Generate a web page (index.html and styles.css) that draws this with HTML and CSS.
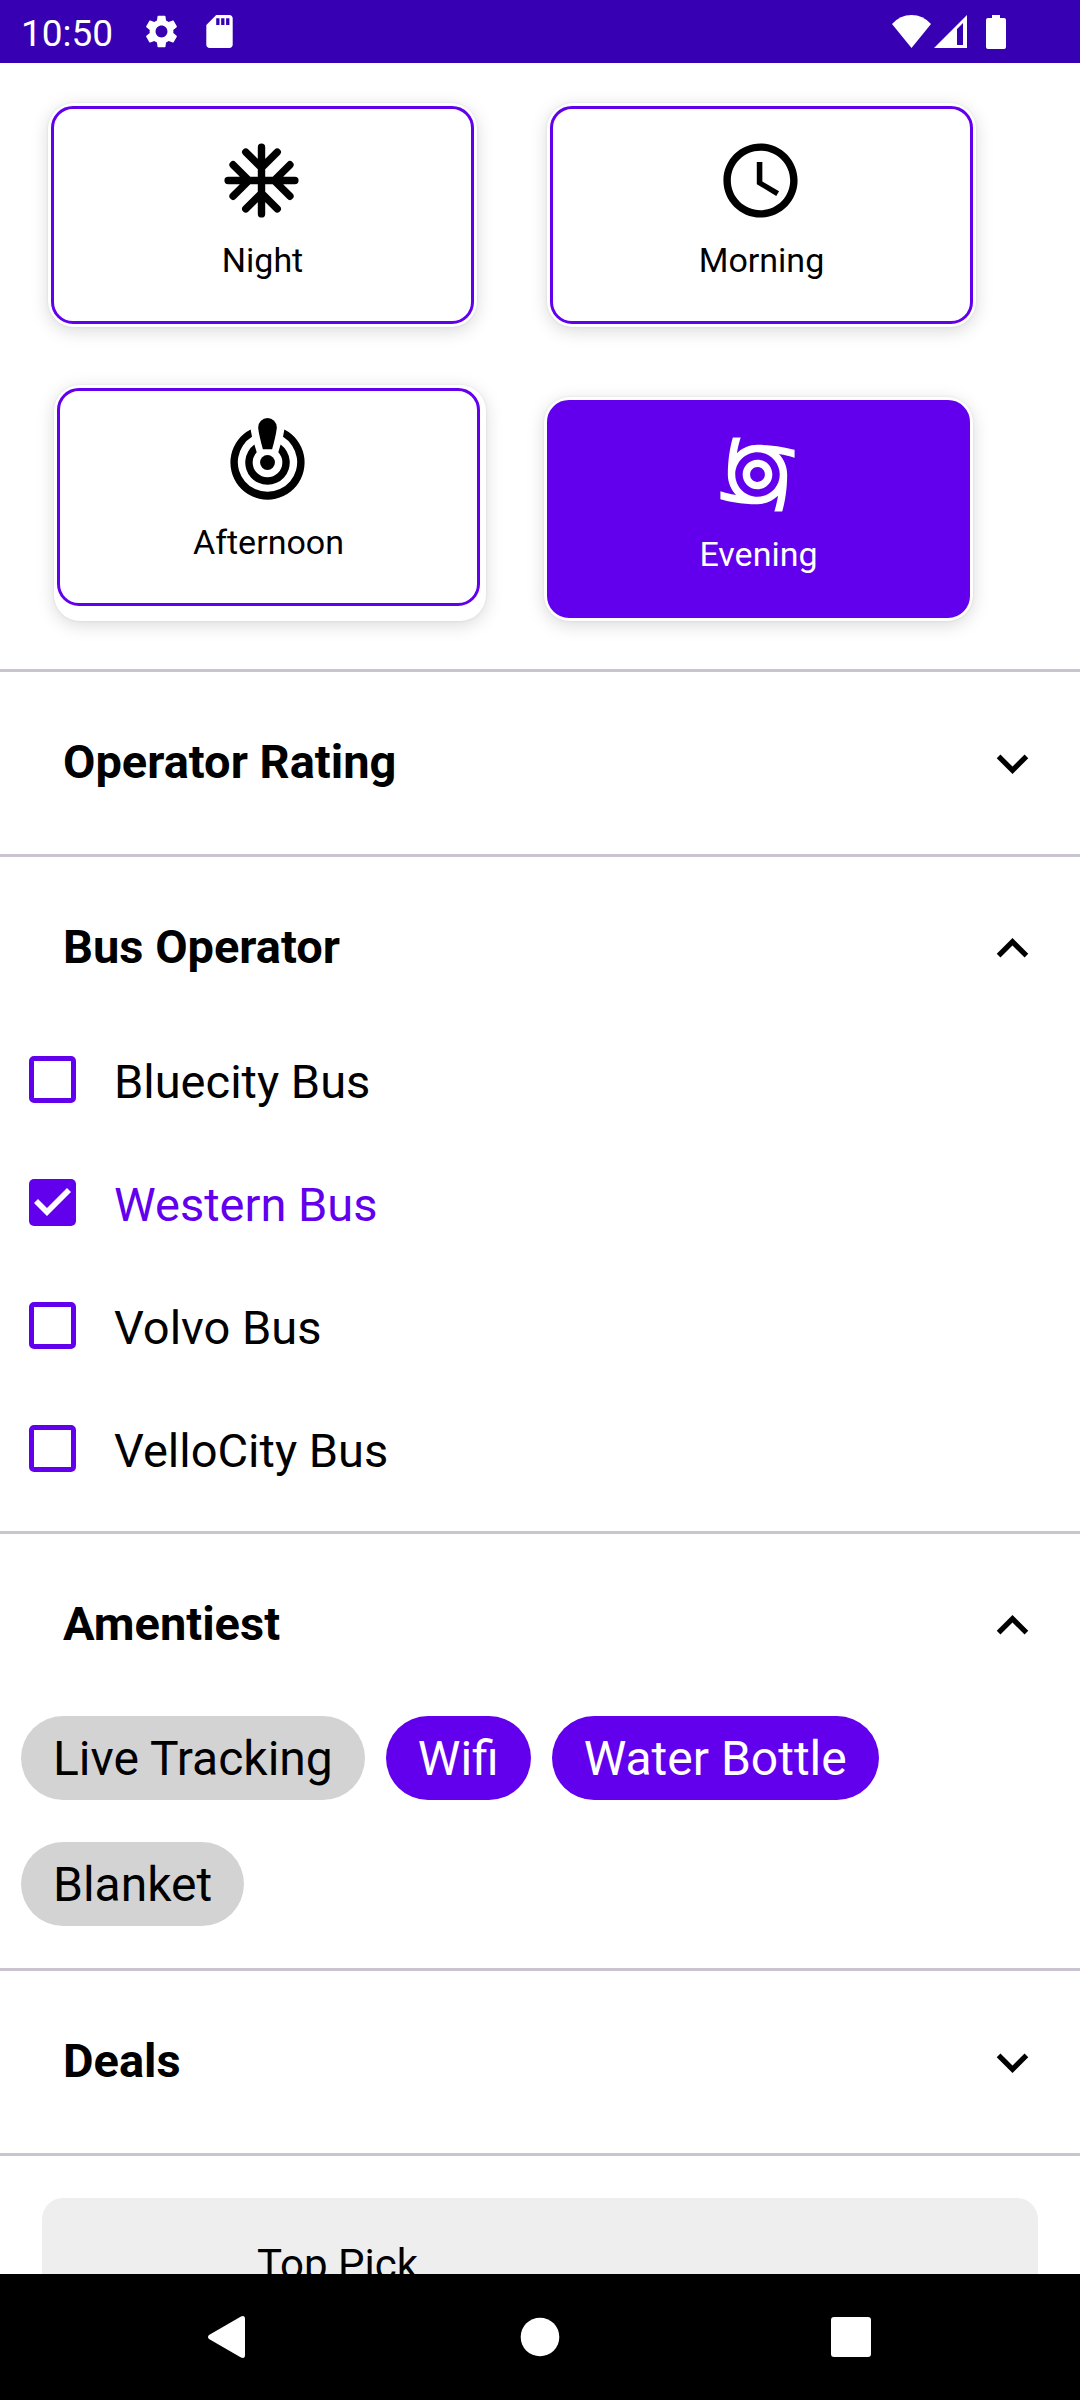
FILE: index.html
```html
<!DOCTYPE html>
<html lang="en">
<head>
<meta charset="utf-8">
<meta name="viewport" content="width=device-width, initial-scale=1">
<title>Bus filters</title>
<link rel="stylesheet" href="styles.css">
</head>
<body>
<header class="status-bar">
  <span class="clock">10:50</span>
  <svg class="gear" width="33" height="33" viewBox="2 2 20 20" aria-hidden="true"><path fill="currentColor" d="M19.14 12.94c.04-.3.06-.61.06-.94 0-.32-.02-.64-.07-.94l2.03-1.58c.18-.14.23-.41.12-.61l-1.92-3.32c-.12-.22-.37-.29-.59-.22l-2.39.96c-.5-.38-1.03-.7-1.62-.94l-.36-2.54c-.04-.24-.24-.41-.48-.41h-3.84c-.24 0-.43.17-.47.41l-.36 2.54c-.59.24-1.13.57-1.62.94l-2.39-.96c-.22-.08-.47 0-.59.22L2.74 8.87c-.12.21-.08.47.12.61l2.03 1.58c-.05.3-.09.63-.09.94s.02.64.07.94l-2.03 1.58c-.18.14-.23.41-.12.61l1.92 3.32c.12.22.37.29.59.22l2.39-.96c.5.38 1.03.7 1.62.94l.36 2.54c.05.24.24.41.48.41h3.84c.24 0 .44-.17.47-.41l.36-2.54c.59-.24 1.13-.56 1.62-.94l2.39.96c.22.08.47 0 .59-.22l1.92-3.32c.12-.22.07-.47-.12-.61l-2.01-1.58zM12 15.6c-1.98 0-3.6-1.62-3.6-3.6s1.62-3.6 3.6-3.6 3.6 1.62 3.6 3.6-1.62 3.6-3.6 3.6z"/></svg>
  <svg class="sd-card" width="27" height="33" viewBox="4 2 16 20" aria-hidden="true"><path fill="currentColor" d="M18 2h-8L4.02 8 4 20c0 1.1.9 2 2 2h12c1.1 0 2-.9 2-2V4c0-1.100-.9-2-2-2zm-6 6h-2V4h2v4zm3 0h-2V4h2v4zm3 0h-2V4h2v4z"/></svg>
  <span class="signals">
    <svg width="39" height="33" viewBox="0 0 39 33" aria-hidden="true"><path fill="currentColor" d="M0 9Q8 0 19.500 0T39 9L19.500 33z"/></svg>
    <svg width="33" height="33" viewBox="0 0 33 33" aria-hidden="true"><path fill="currentColor" fill-rule="evenodd" d="M0 33L33 0v33zM23 14v16h6V8z"/></svg>
    <svg class="battery" width="20" height="34" viewBox="0 0 20 34" aria-hidden="true"><path fill="currentColor" d="M6 0h8v3h4q2 0 2 2v27q0 2-2 2H2q-2 0-2-2V5q0-2 2-2h4z"/></svg>
  </span>
</header>

<main class="filters">
  <section class="times" aria-label="Departure time">
    <div class="time-row">
      <div class="time-card">
        <button class="time" type="button" aria-pressed="false">
          <svg class="time-icon" viewBox="0 0 24 24" aria-hidden="true"><path fill="none" stroke="currentColor" stroke-width="2" stroke-linecap="round" d="M12 3v18M3 12h18M7.760 4.340L12 8.580l4.240-4.240M7.760 19.660L12 15.420l4.240 4.240M4.340 7.760L8.580 12l-4.240 4.240M19.660 7.760L15.420 12l4.240 4.240"/></svg>
          <span>Night</span>
        </button>
      </div>
      <div class="time-card">
        <button class="time" type="button" aria-pressed="false">
          <svg class="time-icon" viewBox="0 0 24 24" aria-hidden="true"><path fill="currentColor" d="M11.99 2C6.47 2 2 6.480 2 12s4.470 10 9.990 10C17.520 22 22 17.520 22 12S17.520 2 11.990 2zM12 20c-4.420 0-8-3.580-8-8s3.580-8 8-8 8 3.580 8 8-3.580 8-8 8z"/><path fill="currentColor" d="M12.500 7H11v6l5.250 3.150.75-1.230-4.500-2.670z"/></svg>
          <span>Morning</span>
        </button>
      </div>
    </div>
    <div class="time-row time-row-late">
      <div class="time-card time-card-loose">
        <button class="time" type="button" aria-pressed="false">
          <svg class="time-icon" viewBox="0 0 24 24" aria-hidden="true"><path fill="currentColor" d="M14.500 2.500C14.500 4 13.250 8.400 13.250 8.400h-2.500S9.500 4 9.500 2.500a2.500 2.500 0 0 1 5 0z"/><circle cx="12" cy="12" r="2" fill="currentColor"/><path fill="currentColor" d="M16.550 3.110L16.180 5.080A8 8 0 1 1 7.820 5.080L7.450 3.110A10 10 0 1 0 16.550 3.110z"/><path fill="currentColor" d="M15.540 7.160L14.910 9.260A4 4 0 1 1 9.090 9.260L8.460 7.160A6 6 0 1 0 15.540 7.160z"/></svg>
          <span>Afternoon</span>
        </button>
      </div>
      <div class="time-card">
        <button class="time time-on" type="button" aria-pressed="true">
          <svg class="time-icon" viewBox="0 0 24 24" aria-hidden="true"><path fill="currentColor" d="M12 8c-2.210 0-4 1.790-4 4s1.790 4 4 4 4-1.790 4-4-1.790-4-4-4zm0 6c-1.100 0-2-.9-2-2s.9-2 2-2 2 .9 2 2-.9 2-2 2z"/><path fill="currentColor" d="M22 7.470V5.350C20.050 4.770 16.560 4 12 4c-2.150 0-4.110.86-5.540 2.240.13-.85.4-2.400 1.010-4.240H5.350C4.770 3.950 4 7.440 4 12c0 2.150.86 4.110 2.240 5.540-.85-.14-2.400-.4-4.240-1.010v2.120C3.950 19.230 7.440 20 12 20c2.150 0 4.110-.86 5.540-2.240-.14.85-.4 2.400-1.010 4.240h2.120c.58-1.950 1.350-5.440 1.350-10 0-2.150-.86-4.110-2.240-5.540.85.13 2.400.4 4.240 1.010zM12 18c-3.310 0-6-2.690-6-6s2.690-6 6-6 6 2.690 6 6-2.690 6-6 6z"/></svg>
          <span>Evening</span>
        </button>
      </div>
    </div>
  </section>

  <section class="group">
    <h2 class="group-title"><button class="toggle" type="button" aria-expanded="false"><span>Operator Rating</span>
      <svg class="chevron" viewBox="0 0 24 24" aria-hidden="true"><path fill="currentColor" d="M7.410 8.590L12 13.170l4.590-4.580L18 10l-6 6-6-6z"/></svg></button></h2>
  </section>

  <section class="group">
    <h2 class="group-title"><button class="toggle toggle-tight" type="button" aria-expanded="true"><span>Bus Operator</span>
      <svg class="chevron" viewBox="0 0 24 24" aria-hidden="true"><path fill="currentColor" d="M7.410 15.410L12 10.830l4.590 4.580L18 14l-6-6-6 6z"/></svg></button></h2>
    <div class="options">
      <label class="option"><input class="box" type="checkbox"><span class="option-name">Bluecity Bus</span></label>
      <label class="option"><input class="box" type="checkbox" checked><span class="option-name">Western Bus</span></label>
      <label class="option"><input class="box" type="checkbox"><span class="option-name">Volvo Bus</span></label>
      <label class="option"><input class="box" type="checkbox"><span class="option-name">VelloCity Bus</span></label>
    </div>
  </section>

  <section class="group">
    <h2 class="group-title"><button class="toggle" type="button" aria-expanded="true"><span>Amentiest</span>
      <svg class="chevron" viewBox="0 0 24 24" aria-hidden="true"><path fill="currentColor" d="M7.410 15.410L12 10.830l4.590 4.580L18 14l-6-6-6 6z"/></svg></button></h2>
    <div class="chips">
      <button class="chip" type="button" aria-pressed="false">Live Tracking</button>
      <button class="chip chip-on" type="button" aria-pressed="true">Wifi</button>
      <button class="chip chip-on" type="button" aria-pressed="true">Water Bottle</button>
      <button class="chip" type="button" aria-pressed="false">Blanket</button>
    </div>
  </section>

  <section class="group">
    <h2 class="group-title"><button class="toggle" type="button" aria-expanded="false"><span>Deals</span>
      <svg class="chevron" viewBox="0 0 24 24" aria-hidden="true"><path fill="currentColor" d="M7.410 8.590L12 13.170l4.590-4.580L18 10l-6 6-6-6z"/></svg></button></h2>
  </section>

  <section class="group picks">
    <div class="pick">Top Pick</div>
  </section>
</main>

<nav class="nav-bar" aria-label="System">
  <button class="nav-key" type="button" aria-label="Back"><svg width="42" height="42" viewBox="0 0 42 42" aria-hidden="true"><path fill="currentColor" d="M1 19Q-1 21 1 23L33 41.500Q37 43 37 39V3Q37-1 33 .5z"/></svg></button>
  <button class="nav-key" type="button" aria-label="Home"><svg width="40" height="40" viewBox="0 0 40 40" aria-hidden="true"><circle cx="20" cy="20" r="19.300" fill="currentColor"/></svg></button>
  <button class="nav-key" type="button" aria-label="Recent apps"><svg width="40" height="40" viewBox="0 0 40 40" aria-hidden="true"><rect width="40" height="40" rx="3" fill="currentColor"/></svg></button>
</nav>
</body>
</html>
```
FILE: styles.css
```css
:root {
  --purple: #6200ee;
  --purple-dark: #3700b3;
  --line: #cac4d0;
}

* {
  box-sizing: border-box;
}

body {
  display: flex;
  flex-direction: column;
  height: 100vh;
  margin: 0;
  background: #fff;
  color: #000;
  font-family: Roboto, "Liberation Sans", sans-serif;
}

button {
  border: 0;
  margin: 0;
  background: none;
  color: inherit;
  font: inherit;
}

svg {
  display: block;
  flex: none;
}

.status-bar {
  display: flex;
  flex: none;
  align-items: center;
  height: 63px;
  padding: 0 74px 0 21px;
  background: var(--purple-dark);
  color: #fff;
  font-size: 37px;
  line-height: 43px;
}

.clock {
  padding-top: 3px;
}

.gear {
  margin-left: 32px;
}

.sd-card {
  margin-left: 28px;
}

.signals {
  display: flex;
  align-items: center;
  gap: 3px;
  margin-left: auto;
}

.battery {
  margin-left: 16px;
}

.filters {
  flex: 1;
  min-height: 0;
  overflow: hidden;
}

.times {
  display: flex;
  flex-direction: column;
  gap: 58px;
  padding: 40px 0 48px;
}

.time-row {
  display: grid;
  grid-template-columns: 1fr 1fr;
  gap: 70px;
  align-items: end;
  padding: 0 104px 0 48px;
}

.time-row-late {
  grid-template-columns: 432fr 429fr;
  gap: 58px;
  padding: 0 107px 0 54px;
}

.time-card {
  padding: 3px;
  border-radius: 26px;
  background: #fff;
  box-shadow: 0 4px 18px rgba(0, 0, 0, 0.15), 0 0 3px rgba(0, 0, 0, 0.08);
}

.time-card-loose {
  padding: 3px 6px 15px 3px;
}

.time {
  display: flex;
  flex-direction: column;
  align-items: center;
  gap: 15px;
  width: 100%;
  padding: 27px 20px 41px;
  border: 3px solid var(--purple);
  border-radius: 22px;
  font-size: 34px;
  line-height: 40px;
}

.time-on {
  background: var(--purple);
  color: #fff;
}

.time-icon {
  width: 89px;
  height: 89px;
  margin-right: 2px;
}

.group {
  border-top: 3px solid var(--line);
}

.group-title {
  margin: 0;
  font-size: 47px;
  font-weight: 700;
  line-height: 60px;
}

.toggle {
  display: flex;
  align-items: flex-start;
  justify-content: space-between;
  width: 100%;
  padding: 60px 36px 59px 63px;
  text-align: left;
}

.toggle-tight {
  padding-bottom: 38px;
}

.chevron {
  width: 63px;
  height: 63px;
}

.options {
  padding: 0 29px 21px;
}

.option {
  display: flex;
  align-items: center;
  gap: 38px;
  height: 123px;
  font-size: 47px;
  line-height: 55px;
}

.option-name {
  padding-top: 4px;
}

.box {
  flex: none;
  width: 47px;
  height: 47px;
  margin: 0;
  border: 5px solid var(--purple);
  border-radius: 5px;
  appearance: none;
}

.box:checked {
  border: 0;
  background: var(--purple);
}

.box:checked::before {
  content: "";
  display: block;
  width: 47px;
  height: 47px;
  background: #fff;
  clip-path: polygon(18px 37px, 5px 24px, 9px 20px, 18px 29px, 38px 9px, 42px 13px);
}

.box:checked + .option-name {
  color: var(--purple);
}

.chips {
  display: flex;
  flex-wrap: wrap;
  gap: 42px 21px;
  padding: 0 21px 42px;
}

.chip {
  height: 84px;
  padding: 2px 32px 0;
  border-radius: 42px;
  background: #d3d3d3;
  font-size: 48px;
  line-height: 56px;
}

.chip-on {
  background: var(--purple);
  color: #fff;
}

.picks {
  padding: 42px;
}

.pick {
  padding: 42px 42px 42px 215px;
  border-radius: 21px;
  background: #eee;
  font-size: 42px;
  line-height: 50px;
}

.nav-bar {
  display: grid;
  flex: none;
  grid-template-columns: repeat(3, 1fr);
  height: 126px;
  padding: 0 73px;
  background: #000;
  color: #fff;
}

.nav-key {
  display: flex;
  align-items: center;
  justify-content: center;
  padding: 0;
}
```
